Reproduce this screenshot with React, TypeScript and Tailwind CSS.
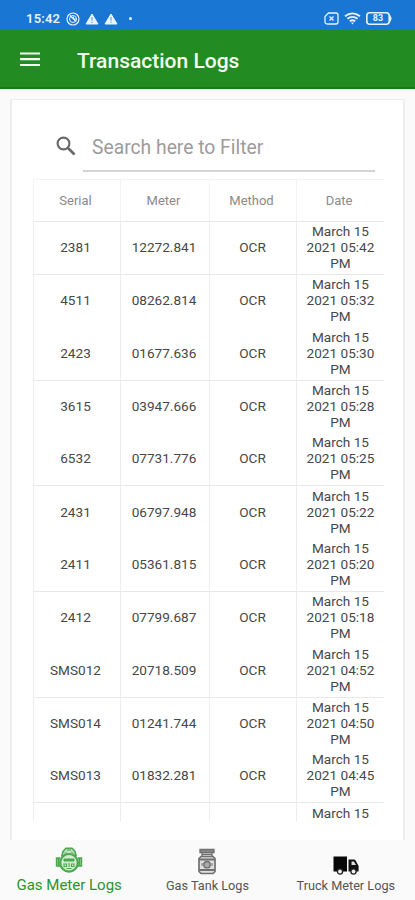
import clsx from "clsx";

interface LogRow {
  serial: string;
  meter: string;
  time: string;
}

const ROWS: LogRow[] = [
  { serial: "2381", meter: "12272.841", time: "05:42" },
  { serial: "4511", meter: "08262.814", time: "05:32" },
  { serial: "2423", meter: "01677.636", time: "05:30" },
  { serial: "3615", meter: "03947.666", time: "05:28" },
  { serial: "6532", meter: "07731.776", time: "05:25" },
  { serial: "2431", meter: "06797.948", time: "05:22" },
  { serial: "2411", meter: "05361.815", time: "05:20" },
  { serial: "2412", meter: "07799.687", time: "05:18" },
  { serial: "SMS012", meter: "20718.509", time: "04:52" },
  { serial: "SMS014", meter: "01241.744", time: "04:50" },
  { serial: "SMS013", meter: "01832.281", time: "04:45" },
];

const COLUMNS = "grid grid-cols-[87px_89px_87px_88px]";
const CELL = "flex items-center justify-center border-l border-[#ededed]";

function StatusBar() {
  return (
    <div className="flex h-[30px] items-center bg-[#1976d2] pt-[7px] pr-[22px] pl-[26px] text-[#e8f3ff]">
      <span className="w-[35px] text-[13px] leading-none font-semibold tracking-[0.2px]">15:42</span>
      <svg className="ml-[5px] size-[14px]" viewBox="0 0 14 14" fill="none" stroke="currentColor">
        <circle cx="7" cy="7" r="6" strokeWidth="1.2" />
        <circle cx="7" cy="7" r="3.5" strokeWidth="1" />
        <path d="M4 3.500l6 6M7.500 4.500v2.500h2.500" strokeWidth="1.2" />
      </svg>
      <WarningIcon className="ml-[5px]" />
      <WarningIcon className="ml-[5px]" />
      <span className="ml-[11px] size-[3px] rounded-full bg-current" />
      <svg className="ml-auto h-[13px] w-[15px]" viewBox="0 0 15 13" fill="none" stroke="currentColor">
        <path d="M4.500 1H12a2 2 0 0 1 2 2v7a2 2 0 0 1-2 2H3a2 2 0 0 1-2-2V4.500z" strokeWidth="1.3" />
        <path d="M5.500 4.500l4 4M9.500 4.500l-4 4" strokeWidth="1.3" />
      </svg>
      <svg className="ml-[5px] h-[13px] w-[17px]" viewBox="0 0 17 13" fill="none" stroke="currentColor">
        <path d="M1 4.200q7.500-5.600 15 0M3.400 6.800q5.100-3.800 10.200 0M5.800 9.200q2.700-1.900 5.400 0" strokeWidth="1.9" />
        <path d="M7 10.500h3l-1.500 2z" fill="currentColor" stroke="none" />
      </svg>
      <div className="relative ml-[5px] flex h-[13px] w-[27px] items-center">
        <svg className="absolute inset-0 h-[13px] w-[27px]" viewBox="0 0 27 13" fill="none" stroke="currentColor">
          <rect x="0.800" y="0.800" width="22.400" height="11.400" rx="3" strokeWidth="1.6" />
          <path d="M24 3.500q2.500 3 0 6z" fill="currentColor" strokeWidth="0.8" />
        </svg>
        <span className="w-[24px] text-center text-[9px] leading-none font-bold">83</span>
      </div>
    </div>
  );
}

function WarningIcon({ className }: { className?: string }) {
  return (
    <svg className={clsx("h-[12px] w-[14px]", className)} viewBox="0 0 14 12">
      <path d="M7 1L13 11H1z" fill="currentColor" stroke="currentColor" strokeLinejoin="round" />
      <path d="M7 4v3.800M7 8.800v1.300" stroke="#5a9fe0" strokeWidth="1.100" />
    </svg>
  );
}

function AppBar() {
  return (
    <header className="flex h-[59px] items-center border-b-2 border-[#147d17] bg-[#228b22] pt-[2px] pl-[20px] text-[#f3fff0]">
      <svg className="h-[15px] w-[20px]" viewBox="0 0 20 15" stroke="currentColor" strokeWidth="2.2">
        <path d="M0 1.500h20M0 7.200h20M0 13h20" />
      </svg>
      <h1 className="ml-[37px] pt-[4px] text-[21px] leading-none font-medium">Transaction Logs</h1>
    </header>
  );
}

function SearchField() {
  return (
    <div className="flex h-[72px] pr-[28px] pl-[44px]">
      <svg className="mt-[36px] size-[20px]" viewBox="0 0 20 20" fill="none" stroke="#686868">
        <circle cx="7.500" cy="7.500" r="5.900" strokeWidth="2.1" />
        <path d="M12 12l6.500 6.500" strokeWidth="2.6" />
      </svg>
      <div className="ml-[7px] flex flex-1 items-end border-b-2 border-[#d4d4d4] pb-[10px] pl-[9px] text-[19.3px] leading-[24px] text-[#9c9c9c]">
        Search here to Filter
      </div>
    </div>
  );
}

function TableRow({ row, ruled }: { row: LogRow; ruled: boolean }) {
  return (
    <div className={clsx(COLUMNS, "h-[52.85px] text-center", ruled && "border-t border-[#e8e8e8]")}>
      <div className={clsx(CELL, "pr-[3px] pb-px")}>{row.serial}</div>
      <div className={clsx(CELL, "pr-[2px] pb-px")}>{row.meter}</div>
      <div className={clsx(CELL, "pr-px pb-px")}>OCR</div>
      <div className={clsx(CELL, "pb-px")}>
        <span>
          March 15
          <br />
          2021 {row.time}
          <br />
          PM
        </span>
      </div>
    </div>
  );
}

function LogTable() {
  return (
    <div className="ml-[21px] h-[643px] w-[351px] overflow-hidden text-[13.6px] leading-[16px] text-[#484848]">
      <div className={clsx(COLUMNS, "h-[42px] border-t border-[#f3f3f3] text-center text-[13px] text-[#8a8a8a]")}>
        {["Serial", "Meter", "Method", "Date"].map((label) => (
          <div key={label} className="flex items-center justify-center border-l border-[#f3f3f3] pt-px pr-[3px]">
            {label}
          </div>
        ))}
      </div>
      {ROWS.map((row, i) => (
        <TableRow key={row.serial} row={row} ruled={i === 0 || i % 2 === 1} />
      ))}
      <div className={clsx(COLUMNS, "h-[52.85px] border-t border-[#e8e8e8] text-center")}>
        <div className="border-l border-[#ededed]" />
        <div className="border-l border-[#ededed]" />
        <div className="border-l border-[#ededed]" />
        <div className="border-l border-[#ededed] pt-[2px]">March 15</div>
      </div>
    </div>
  );
}

function GasMeterIcon() {
  return (
    <svg className="h-[26px] w-[28px]" viewBox="0 0 28 26" fill="none" stroke="#4ba84f">
      <path d="M7 8.500L8 4.500 11 1.200h6l3 3.300 1 4z" fill="#c4e3c5" strokeWidth="1.6" />
      <path d="M9.500 6h2.500M16 6h2.500M12 3.500q2-1.500 4 0" strokeWidth="1.2" />
      <path d="M5 11H1.500v8H5M23 11h3.500v8H23M3.500 11v8M24.500 11v8" fill="#9bcf9c" strokeWidth="1.4" />
      <circle cx="14" cy="15.800" r="8.800" fill="#d3ebd3" strokeWidth="2.2" />
      <path d="M9 12h10v2H9z" fill="#4ba84f" strokeWidth="1" />
      <path d="M9 17h2.500v2.500H9zM16.500 17H19v2.500h-2.500zM11.500 21.500h5M14 16v4" strokeWidth="1.1" />
    </svg>
  );
}

function GasTankIcon() {
  return (
    <svg className="h-[27px] w-[20px]" viewBox="0 0 20 27" fill="none" stroke="#707070">
      <path d="M3 1.500h14v3H3zM5 5v3.500M15 5v3.500M5 6.500h10" fill="#8c8c8c" strokeWidth="1.3" />
      <path d="M4 8.500h12l2 2v13l-2 2H4l-2-2v-13z" fill="#e0e0e0" strokeWidth="1.7" />
      <path d="M2 11.500h16M2 22h16" strokeWidth="1.8" />
      <circle cx="10" cy="16.700" r="3.200" fill="#aaa" strokeWidth="1.4" />
      <path d="M5 15v3M15 15v3" strokeWidth="1" />
    </svg>
  );
}

function TruckIcon() {
  return (
    <svg className="h-[19px] w-[26px]" viewBox="0 0 26 19">
      <path d="M0.500 0.500h13.500v15H0.500z" fill="#080808" />
      <path d="M15.500 3.500h5.500q1 0 1.600 1l3 5.500v5.500H15.500z" fill="#111" />
      <path d="M18.500 5.500h2.500l2 3.500h-4.500z" fill="#ddd" />
      <circle cx="7" cy="15.500" r="2.600" fill="#eee" stroke="#222" strokeWidth="1.3" />
      <circle cx="20.500" cy="15.500" r="2.600" fill="#eee" stroke="#222" strokeWidth="1.3" />
    </svg>
  );
}

function BottomNav() {
  return (
    <nav className="grid h-[60px] grid-cols-3 bg-[#fafafa] text-[12.7px] leading-[16px] text-[#555]">
      <div className="flex flex-col items-center pt-[7px]">
        <GasMeterIcon />
        <span className="mt-[4px] text-[15px] text-[#2b932d]">Gas Meter Logs</span>
      </div>
      <div className="flex flex-col items-center pt-[8px]">
        <GasTankIcon />
        <span className="mt-[3px]">Gas Tank Logs</span>
      </div>
      <div className="flex flex-col items-center pt-[16px]">
        <TruckIcon />
        <span className="mt-[3px]">Truck Meter Logs</span>
      </div>
    </nav>
  );
}

export default function App() {
  return (
    <div className="flex h-[900px] w-[415px] flex-col overflow-hidden bg-[#fafafa] font-[Roboto,sans-serif]">
      <StatusBar />
      <AppBar />
      <main className="h-[751px] pt-[10px] pr-[10px] pl-[10px]">
        <section className="h-[741px] border-x-2 border-t border-[#eeeeee] bg-white">
          <SearchField />
          <div className="h-[7px]" />
          <LogTable />
        </section>
      </main>
      <BottomNav />
    </div>
  );
}
